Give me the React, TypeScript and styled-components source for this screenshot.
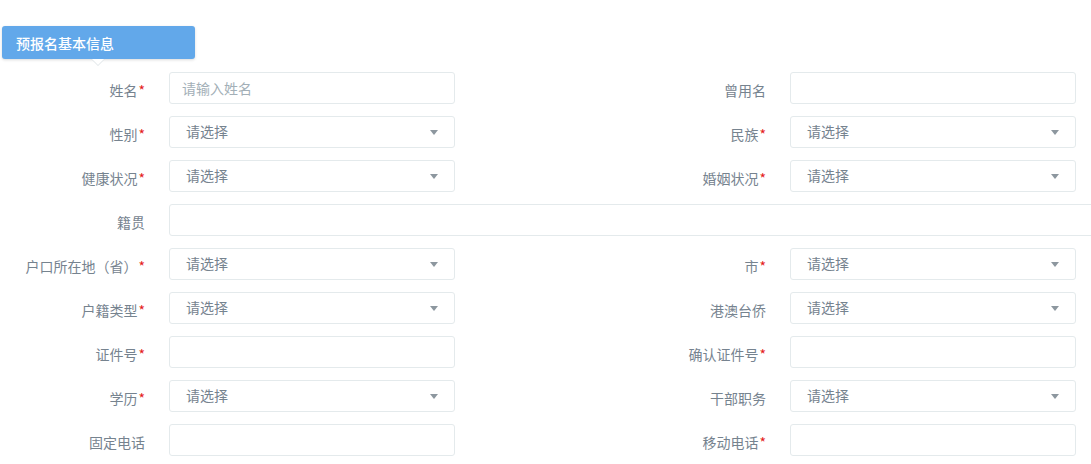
import React from 'react';
import styled, { createGlobalStyle } from 'styled-components';

const colors = {
  primary: '#62a8ea',
  label: '#76838f',
  placeholder: '#a3afb7',
  border: '#e4eaec',
  required: '#e41b1b',
};

const GlobalStyle = createGlobalStyle`
  html, body {
    margin: 0;
    padding: 0;
    background: #fff;
    overflow: hidden;
  }

  body {
    font-family: "Noto Sans CJK SC", "Noto Sans", "Liberation Sans", sans-serif;
    font-size: 14px;
    color: ${colors.label};
  }
`;

const Page = styled('div')`
  padding-top: 26px;
  width: 1091px;
`;

const SectionTab = styled('div')`
  position: relative;
  box-sizing: border-box;
  width: 193px;
  height: 33px;
  margin-left: 2px;
  padding-left: 14px;
  display: flex;
  align-items: center;
  background-color: ${colors.primary};
  border-radius: 3px;
  box-shadow: 0 1px 3px rgba(0, 0, 0, 0.15);
  color: #fff;
  font-size: 14px;
  font-weight: 500;

  &::before,
  &::after {
    content: '';
    position: absolute;
    width: 0;
    height: 0;
    top: 100%;
  }

  &::before {
    left: 89px;
    border-left: 7px solid transparent;
    border-right: 7px solid transparent;
    border-top: 7px solid #dde3e6;
  }

  &::after {
    left: 90px;
    border-left: 6px solid transparent;
    border-right: 6px solid transparent;
    border-top: 6px solid #fff;
  }
`;

const Form = styled('div')`
  display: grid;
  grid-template-columns: 145px 286px 287px 286px;
  grid-auto-rows: 32px;
  column-gap: 24px;
  row-gap: 12px;
  margin-top: 13px;
`;

const Label = styled('label')`
  text-align: right;
  padding-top: 8px;
  line-height: 20px;
  white-space: nowrap;
  color: ${colors.label};
`;

const Star = styled('span')`
  color: ${colors.required};
  margin-left: 1px;
`;

interface FieldBoxProps {
  $wide?: boolean;
}

const TextInput = styled('input')<FieldBoxProps>`
  box-sizing: border-box;
  height: 32px;
  width: ${props => (props.$wide ? '940px' : '100%')};
  grid-column: ${props => (props.$wide ? '2 / -1' : 'auto')};
  padding: 0 12px;
  border: 1px solid ${colors.border};
  border-radius: 3px;
  font-family: inherit;
  font-size: 14px;
  color: ${colors.label};
  background: #fff;
  outline: none;

  &::placeholder {
    color: ${colors.placeholder};
  }
`;

const SelectBox = styled('div')`
  box-sizing: border-box;
  height: 32px;
  padding: 0 16px 2px 16px;
  display: flex;
  align-items: center;
  justify-content: space-between;
  border: 1px solid ${colors.border};
  border-radius: 3px;
  background: #fff;
  color: ${colors.label};
  line-height: 20px;
`;

const Caret = styled('span')`
  width: 0;
  height: 0;
  margin-top: 2px;
  border-left: 4px solid transparent;
  border-right: 4px solid transparent;
  border-top: 5px solid #8d979f;
`;

type Field = {
  label: string;
  required?: boolean;
  kind: 'input' | 'select';
  placeholder?: string;
};

const Select: React.FC = () => (
  <SelectBox>
    <span>请选择</span>
    <Caret />
  </SelectBox>
);

const FieldCells: React.FC<{ field: Field }> = ({ field }) => (
  <>
    <Label>
      {field.label}
      {field.required && <Star>*</Star>}
    </Label>
    {field.kind === 'select' ? <Select /> : <TextInput placeholder={field.placeholder} />}
  </>
);

const pairs: [Field, Field][] = [
  [
    { label: '姓名', required: true, kind: 'input', placeholder: '请输入姓名' },
    { label: '曾用名', kind: 'input' },
  ],
  [
    { label: '性别', required: true, kind: 'select' },
    { label: '民族', required: true, kind: 'select' },
  ],
  [
    { label: '健康状况', required: true, kind: 'select' },
    { label: '婚姻状况', required: true, kind: 'select' },
  ],
];

const pairsAfter: [Field, Field][] = [
  [
    { label: '户口所在地（省）', required: true, kind: 'select' },
    { label: '市', required: true, kind: 'select' },
  ],
  [
    { label: '户籍类型', required: true, kind: 'select' },
    { label: '港澳台侨', kind: 'select' },
  ],
  [
    { label: '证件号', required: true, kind: 'input' },
    { label: '确认证件号', required: true, kind: 'input' },
  ],
  [
    { label: '学历', required: true, kind: 'select' },
    { label: '干部职务', kind: 'select' },
  ],
  [
    { label: '固定电话', kind: 'input' },
    { label: '移动电话', required: true, kind: 'input' },
  ],
];

const App: React.FC = () => (
  <Page>
    <GlobalStyle />
    <SectionTab>预报名基本信息</SectionTab>
    <Form>
      {pairs.map(([a, b]) => (
        <React.Fragment key={a.label}>
          <FieldCells field={a} />
          <FieldCells field={b} />
        </React.Fragment>
      ))}
      <Label>籍贯</Label>
      <TextInput $wide />
      {pairsAfter.map(([a, b]) => (
        <React.Fragment key={a.label}>
          <FieldCells field={a} />
          <FieldCells field={b} />
        </React.Fragment>
      ))}
    </Form>
  </Page>
);

export default App;
